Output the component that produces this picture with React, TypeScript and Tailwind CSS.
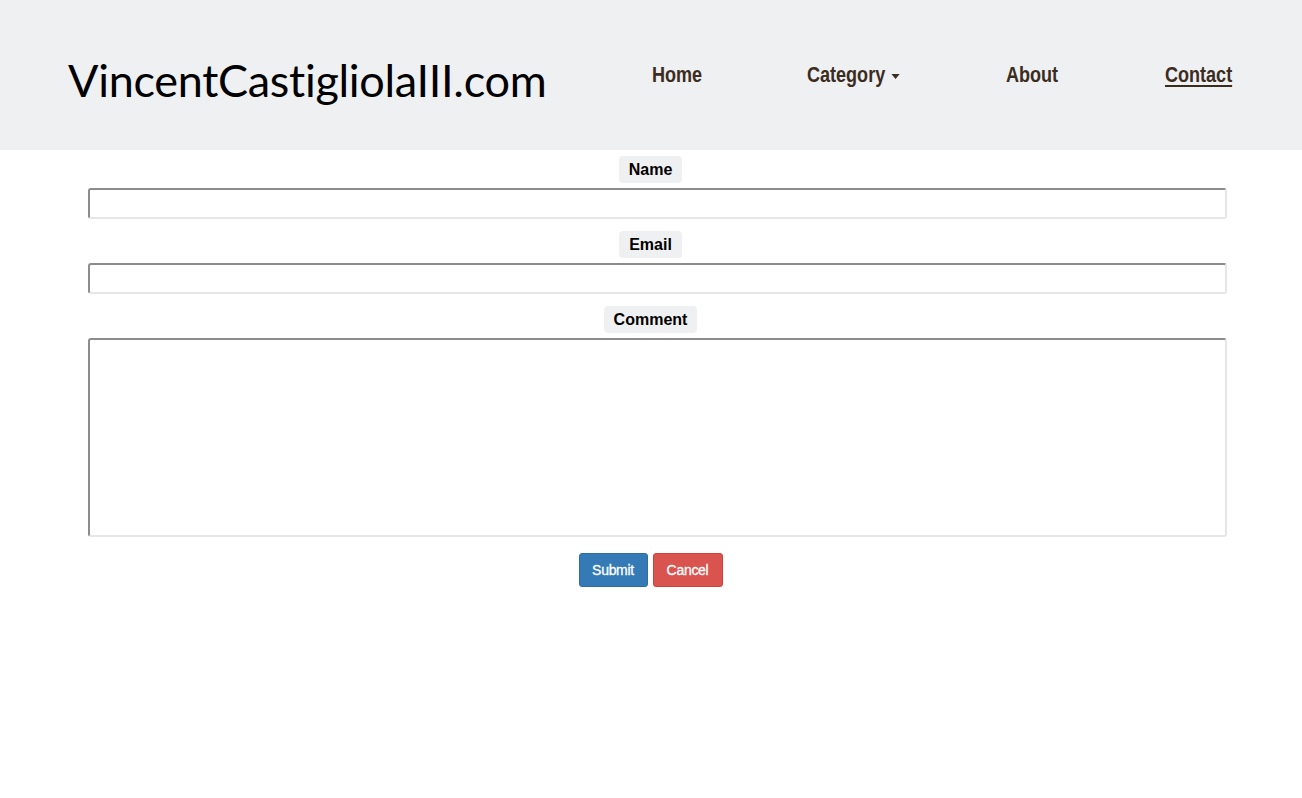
import React from "react";

const inputBorder =
  "border-2 border-t-[#8c8c8c] border-l-[#8c8c8c] border-r-[#e6e6e6] border-b-[#e6e6e6] rounded-[3px] bg-white";

function Label({ children }: { children: React.ReactNode }) {
  return (
    <div className="flex justify-center -ml-[89px] -mr-[75px]">
      <span className="bg-[#eff0f2] rounded-[4px] px-[10px] h-[27px] flex items-center text-[16px] font-bold text-black font-['Liberation_Sans',Arial,sans-serif]">
        {children}
      </span>
    </div>
  );
}

function NavItem({ left, children, className = "" }: { left: string; children: React.ReactNode; className?: string }) {
  return (
    <span className={`absolute ${left} top-[63px] inline-flex items-center origin-left scale-x-[0.82] ${className}`}>
      {children}
    </span>
  );
}

export default function App() {
  return (
    <div className="w-[1302px] h-[798px] bg-white">
      <header className="relative h-[150px] bg-[#eff0f2] flex items-center">
        <div className="pl-[68px] w-[600px] pt-[12px]">
          <span className="text-[45px] text-black tracking-[-0.3px] font-['Lato','Gill_Sans',sans-serif]">
            VincentCastigliolaIII.com
          </span>
        </div>
        <nav className="text-[22px] leading-[24px] font-bold text-[#3a2c1e] font-['Liberation_Sans',Arial,sans-serif]">
          <NavItem left="left-[652px]">Home</NavItem>
          <NavItem left="left-[807px]">
            Category
            <span className="ml-[8px] mt-[2px] w-0 h-0 border-l-[5px] border-r-[5px] border-t-[5px] border-l-transparent border-r-transparent border-t-[#3a2c1e]" />
          </NavItem>
          <NavItem left="left-[1006px]">About</NavItem>
          <NavItem left="left-[1165px]" className="underline underline-offset-[3px]">Contact</NavItem>
        </nav>
      </header>
      <main className="pl-[88px] pt-[6px] pr-[75px] flex flex-col">
        <Label>Name</Label>
        <div className={`mt-[5px] h-[31px] ${inputBorder}`} />
        <div className="mt-[12px]">
          <Label>Email</Label>
        </div>
        <div className={`mt-[5px] h-[31px] ${inputBorder}`} />
        <div className="mt-[12px]">
          <Label>Comment</Label>
        </div>
        <div className={`mt-[5px] h-[199px] ${inputBorder}`} />
        <div className="mt-[16px] -ml-[89px] -mr-[75px] flex justify-center gap-[5px] font-['Liberation_Sans',Arial,sans-serif] text-[14px] text-white tracking-[-0.3px] [-webkit-text-stroke:0.3px_white]">
          <button className="w-[69px] h-[34px] rounded-[3px] bg-[#337ab7] border border-[#2e6da4]">Submit</button>
          <button className="w-[70px] h-[34px] rounded-[3px] bg-[#d9534f] border border-[#d43f3a]">Cancel</button>
        </div>
      </main>
    </div>
  );
}
